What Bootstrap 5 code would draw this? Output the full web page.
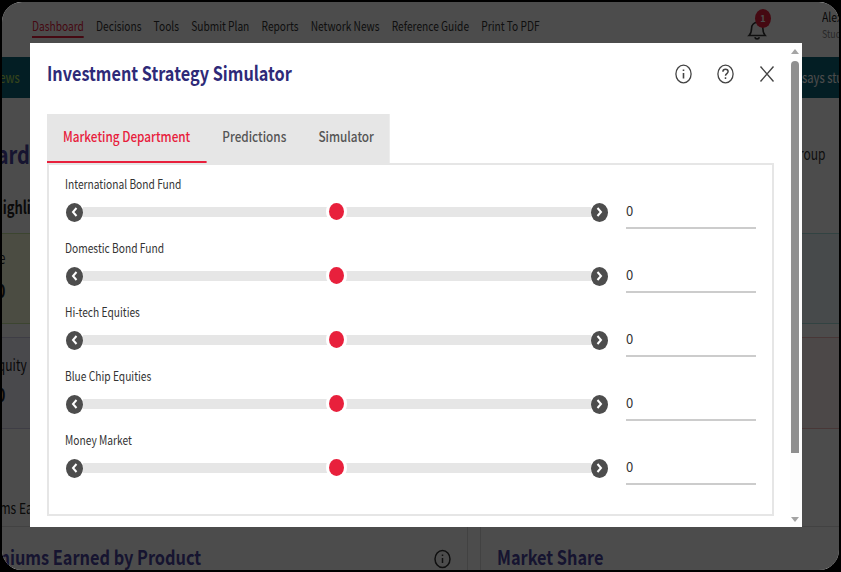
<!DOCTYPE html>
<html lang="en">
<head>
<meta charset="utf-8">
<title>Investment Strategy Simulator</title>
<link rel="stylesheet" href="https://cdn.jsdelivr.net/npm/bootstrap@5.3.0/dist/css/bootstrap.min.css">
<style>
html,body{height:100%;margin:0;overflow:hidden;background:#000;font-family:"Noto Sans CJK SC","Noto Sans",sans-serif;}
.frame{position:relative;width:841px;height:572px;background:#fff;border:solid #000;border-width:2px 2.5px 2px 2px;border-radius:22px;overflow:hidden;color:#222;}
.sx-l,.sx-r{display:inline-block;white-space:nowrap;transform:scaleX(.8);}
.sx-l{transform-origin:left center;}
.sx-r{transform-origin:right center;}
.top-bar{height:55px;padding-left:30px;}
.top-bar .nav{gap:15.6px;font-size:13px;line-height:18px;margin-top:-5px;transform:scaleX(.783);transform-origin:left center;flex-wrap:nowrap;width:700px;}
.top-bar .nav-link{padding:0 0 1px;color:#333;white-space:nowrap;}
.top-bar .nav-link.active{color:#e8203c;border-bottom:2px solid #e8203c;}
.nav-slot{flex:1;min-width:0;}
.bell-box{position:relative;width:24px;height:24px;margin-right:53px;margin-top:-8px;}
.bell-dot{position:absolute;left:10px;top:-4.5px;width:16px;height:19px;border-radius:50%;background:#e8203c;color:#fff;font-size:9px;font-weight:700;line-height:19px;text-align:center;}
.who{width:17px;overflow:hidden;line-height:17px;font-size:13px;margin-top:-9px;}
.who small{display:block;font-size:11px;color:#888;}
.ticker{height:41px;background:#0d6478;color:#fff;font-size:14px;}
.lc{display:flex;justify-content:flex-end;white-space:nowrap;}
.news-l{width:18px;color:#b7e35a;}
.rc{width:37px;white-space:nowrap;}
.dash-h{height:37px;margin-top:37px;}
.dash-t{width:28px;font-size:25px;font-weight:700;color:#4a45a0;line-height:37px;}
.grp{font-size:15px;color:#333;width:37px;display:flex;justify-content:flex-end;padding:2px 14px 0 0;}
.high-h{height:34px;margin-top:18px;font-size:18px;font-weight:700;color:#222;line-height:32px;}
.high-h span{margin-left:-9px;transform:scaleX(.72);}
.kpi{height:91px;margin-top:9px;}
.kpi+.kpi{margin-top:13px;height:92px;}
.kpi-l,.kpi-r{border:solid;border-width:1px 0;}
.kpi-l{width:28px;padding-top:15px;}
.kpi-r{width:37px;}
.t-green{background:#fbffdc;border-color:#c9e8a0;}
.t-lav{background:#f6f5ff;border-color:#cfcbe8;padding-top:18px;}
.t-teal{background:#edf9fb;border-color:#a8e0dc;}
.t-pink{background:#fff1f1;border-color:#f0b8b8;}
.kpi-l .lc{font-size:15px;line-height:18px;}
.w3{width:3px;}
.w25{width:25px;}
.kpi-l .kpi-n{font-size:19px;font-weight:700;line-height:22px;margin-top:12px;}
.t-lav .kpi-n{margin-top:9px !important;}
.prem-l{height:98px;padding-top:69px;font-size:15px;line-height:20px;border-bottom:1px solid #ddd;}
.prem-l span{margin-left:-43px;}
.bot{height:43px;}
.pane-a{width:466px;border-right:1px solid #ddd;padding-right:16px;overflow:hidden;}
.pane-b{margin-left:12px;border-left:1px solid #ddd;padding-left:16px;}
.bot-t{font-size:20px;font-weight:700;color:#4a45a0;line-height:30px;white-space:nowrap;padding-top:15px;transform:scaleX(.815);transform-origin:left center;}
.pane-a .bot-t{margin-left:-35px;}
.bot-i{margin-top:22px;flex:none;}
.shade{position:absolute;inset:0;background:rgba(0,0,0,.7);}
.sim{position:absolute;left:28px;top:41px;width:772px;height:484px;border:0;border-radius:0;display:flex;flex-direction:row;background:#fff;color:#222;}
.sim-main{flex:1;min-width:0;padding:0 16px 0 17px;}
.sim-head{height:71px;padding-top:12px;}
.sim-title{font-size:20px;font-weight:700;color:#2e2a78;line-height:36px;margin:0;transform:scaleX(.811);transform-origin:left center;white-space:nowrap;}
.sim-acts{gap:25px;padding-top:9px;margin-right:-1px;}
.sim-acts svg{display:block;}
.act-btn{background:none;border:0;padding:0;line-height:0;}
.tabs-w{display:inline-flex;flex-wrap:nowrap;background:#e6e6e6;height:49px;border:0;transform:scaleX(.84);transform-origin:left center;}
.tabs-w .nav-link{border:0;border-radius:0;padding:0 19.1px;height:49px;line-height:45px;font-size:14px;font-weight:500;color:#555;background:none;margin:0;white-space:nowrap;}
.tabs-w .nav-link.active{color:#e8203c;background:#e6e6e6;border-bottom:2.5px solid #e8203c;}
.panel-box{border:2px solid #e6e6e6;padding:11px 16px 18px;width:727px;}
.f-row{height:64px;display:flex;gap:17px;}
.f-left{width:544px;}
.f-lab{display:block;font-size:12.5px;line-height:16px;margin:0 0 10px;color:#333;transform:scaleX(.817);transform-origin:left center;white-space:nowrap;}
.f-slide{display:flex;align-items:center;height:20px;padding:0 1px 0 .5px;}
.arr{flex:none;width:17px;height:19px;border:0;padding:0;background:#4d4d4d;border-radius:50%;display:flex;align-items:center;justify-content:center;}
.f-slide .form-range{flex:1;min-width:0;height:20px;padding:0;margin:0;}
.form-range::-webkit-slider-runnable-track{height:10px;background:#e6e6e6;border-radius:0;}
.form-range::-webkit-slider-thumb{-webkit-appearance:none;width:15px;height:17px;margin-top:-4px;border-radius:50%;background:#e8203c;box-shadow:0 0 0 3px #fff;}
.f-val{flex:none;width:130px;height:31px;margin-top:22px;border:0;border-bottom:2px solid #ccc;border-radius:0;padding:0 0 5px;font-size:13px;color:#333;box-shadow:none;font-family:inherit;}
.sbar{flex:none;width:12px;display:flex;flex-direction:column;align-items:center;padding:6px 1.5px 5px 0;background:#fdfdfd;}
.tri-u,.tri-d{width:0;height:0;border-left:4.5px solid transparent;border-right:4.5px solid transparent;}
.tri-u{border-bottom:5px solid #a3a3a3;}
.tri-d{border-top:5px solid #a3a3a3;margin-top:auto;}
.thumbv{width:8px;height:392px;margin-top:7px;background:#8f8f8f;border-radius:4px 4px 0 0;}
</style>
</head>
<body>
<div class="frame">
  <header class="top-bar d-flex align-items-center">
    <div class="nav-slot">
    <ul class="nav">
      <li class="nav-item"><a class="nav-link active" href="#">Dashboard</a></li>
      <li class="nav-item"><a class="nav-link" href="#">Decisions</a></li>
      <li class="nav-item"><a class="nav-link" href="#">Tools</a></li>
      <li class="nav-item"><a class="nav-link" href="#">Submit Plan</a></li>
      <li class="nav-item"><a class="nav-link" href="#">Reports</a></li>
      <li class="nav-item"><a class="nav-link" href="#">Network News</a></li>
      <li class="nav-item"><a class="nav-link" href="#">Reference Guide</a></li>
      <li class="nav-item"><a class="nav-link" href="#">Print To PDF</a></li>
    </ul>
    </div>
    <div class="bell-box">
      <svg width="24" height="24" viewBox="0 0 24 24" fill="none" stroke="#333" stroke-width="1.6"><path d="M4 19.5c2-2 2.6-4 2.6-7.5a5.6 5.6 0 0 1 11.200 0c0 3.500.6 5.500 2.400 7.500z"/><path d="M9.800 21.200a2.400 2.400 0 0 0 4.600 0"/></svg>
      <span class="bell-dot">1</span>
    </div>
    <div class="who"><span class="sx-l">Alex</span><small class="sx-l">Student</small></div>
  </header>
  <div class="ticker d-flex align-items-center justify-content-between">
    <div class="lc news-l"><span class="sx-r">News</span></div>
    <div class="rc"><span class="sx-l">says students</span></div>
  </div>
  <div class="dash-h d-flex justify-content-between align-items-center">
    <div class="lc dash-t"><span class="sx-r">Dashboard</span></div>
    <div class="rc grp"><span class="sx-r">Group</span></div>
  </div>
  <div class="high-h"><span class="sx-l">Highlights</span></div>
  <div class="kpi d-flex justify-content-between">
    <div class="kpi-l t-green"><div class="lc w3"><span class="sx-r">Revenue</span></div><div class="lc kpi-n w3"><span class="sx-r">$0</span></div></div>
    <div class="kpi-r t-teal"></div>
  </div>
  <div class="kpi d-flex justify-content-between">
    <div class="kpi-l t-lav"><div class="lc w25"><span class="sx-r">Equity</span></div><div class="lc kpi-n w3"><span class="sx-r">$0</span></div></div>
    <div class="kpi-r t-pink"></div>
  </div>
  <div class="prem-l"><span class="sx-l">Premiums Earned by Product</span></div>
  <div class="bot d-flex">
    <div class="pane-a d-flex justify-content-between">
      <div class="bot-t">Premiums Earned by Product</div>
      <svg class="bot-i" width="17" height="20" viewBox="0 0 17 20" fill="none" stroke="#333" stroke-width="1.500"><ellipse cx="8.500" cy="10" rx="7.500" ry="8.500"/><path d="M8.500 9v5M8.500 5.500v1.500"/></svg>
    </div>
    <div class="pane-b"><div class="bot-t">Market Share</div></div>
  </div>

  <div class="shade"></div>

  <div class="sim modal-content" role="dialog" aria-label="Investment Strategy Simulator">
    <div class="sim-main">
      <div class="sim-head d-flex justify-content-between align-items-start">
        <h5 class="sim-title">Investment Strategy Simulator</h5>
        <div class="sim-acts d-flex align-items-center">
          <button class="act-btn" type="button" aria-label="Info"><svg width="17" height="20" viewBox="0 0 17 20" fill="none" stroke="#444" stroke-width="1.300"><ellipse cx="8.500" cy="10" rx="7.600" ry="8.800"/><path d="M8.500 9v5.500M8.500 5.500v1.500" stroke-width="1.600"/></svg></button>
          <button class="act-btn" type="button" aria-label="Help"><svg width="17" height="20" viewBox="0 0 17 20" fill="none" stroke="#444" stroke-width="1.300"><ellipse cx="8.500" cy="10" rx="7.600" ry="8.800"/><path d="M5.900 7.800c0-1.700 1.100-2.500 2.600-2.500s2.600.9 2.600 2.300c0 2-2.600 2-2.600 4.200M8.500 13.300v1.600" stroke-width="1.500"/></svg></button>
          <button class="act-btn" type="button" aria-label="Close"><svg width="16" height="18" viewBox="0 0 16 18" fill="none" stroke="#444" stroke-width="1.400"><path d="M1.500 1.500l13 15M14.500 1.500l-13 15"/></svg></button>
        </div>
      </div>
      <ul class="nav nav-tabs tabs-w" role="tablist">
        <li class="nav-item"><a class="nav-link active" href="#">Marketing Department</a></li>
        <li class="nav-item"><a class="nav-link" href="#">Predictions</a></li>
        <li class="nav-item"><a class="nav-link" href="#">Simulator</a></li>
      </ul>
      <div class="panel-box">
        <div class="f-row"><div class="f-left"><label class="f-lab">International Bond Fund</label><div class="f-slide"><button class="arr" type="button" aria-label="Decrease"><svg width="7" height="10" viewBox="0 0 7 10" fill="none" stroke="#fff" stroke-width="2"><path d="M5.500 1L2 5l3.500 4"/></svg></button><input class="form-range" type="range" min="-100" max="100" value="0" aria-label="International Bond Fund"><button class="arr" type="button" aria-label="Increase"><svg width="7" height="10" viewBox="0 0 7 10" fill="none" stroke="#fff" stroke-width="2"><path d="M1.500 1L5 5 1.500 9"/></svg></button></div></div><input class="form-control f-val" value="0" aria-label="International Bond Fund value"></div>
        <div class="f-row"><div class="f-left"><label class="f-lab">Domestic Bond Fund</label><div class="f-slide"><button class="arr" type="button" aria-label="Decrease"><svg width="7" height="10" viewBox="0 0 7 10" fill="none" stroke="#fff" stroke-width="2"><path d="M5.500 1L2 5l3.500 4"/></svg></button><input class="form-range" type="range" min="-100" max="100" value="0" aria-label="Domestic Bond Fund"><button class="arr" type="button" aria-label="Increase"><svg width="7" height="10" viewBox="0 0 7 10" fill="none" stroke="#fff" stroke-width="2"><path d="M1.500 1L5 5 1.500 9"/></svg></button></div></div><input class="form-control f-val" value="0" aria-label="Domestic Bond Fund value"></div>
        <div class="f-row"><div class="f-left"><label class="f-lab">Hi-tech Equities</label><div class="f-slide"><button class="arr" type="button" aria-label="Decrease"><svg width="7" height="10" viewBox="0 0 7 10" fill="none" stroke="#fff" stroke-width="2"><path d="M5.500 1L2 5l3.500 4"/></svg></button><input class="form-range" type="range" min="-100" max="100" value="0" aria-label="Hi-tech Equities"><button class="arr" type="button" aria-label="Increase"><svg width="7" height="10" viewBox="0 0 7 10" fill="none" stroke="#fff" stroke-width="2"><path d="M1.500 1L5 5 1.500 9"/></svg></button></div></div><input class="form-control f-val" value="0" aria-label="Hi-tech Equities value"></div>
        <div class="f-row"><div class="f-left"><label class="f-lab">Blue Chip Equities</label><div class="f-slide"><button class="arr" type="button" aria-label="Decrease"><svg width="7" height="10" viewBox="0 0 7 10" fill="none" stroke="#fff" stroke-width="2"><path d="M5.500 1L2 5l3.500 4"/></svg></button><input class="form-range" type="range" min="-100" max="100" value="0" aria-label="Blue Chip Equities"><button class="arr" type="button" aria-label="Increase"><svg width="7" height="10" viewBox="0 0 7 10" fill="none" stroke="#fff" stroke-width="2"><path d="M1.500 1L5 5 1.500 9"/></svg></button></div></div><input class="form-control f-val" value="0" aria-label="Blue Chip Equities value"></div>
        <div class="f-row"><div class="f-left"><label class="f-lab">Money Market</label><div class="f-slide"><button class="arr" type="button" aria-label="Decrease"><svg width="7" height="10" viewBox="0 0 7 10" fill="none" stroke="#fff" stroke-width="2"><path d="M5.500 1L2 5l3.500 4"/></svg></button><input class="form-range" type="range" min="-100" max="100" value="0" aria-label="Money Market"><button class="arr" type="button" aria-label="Increase"><svg width="7" height="10" viewBox="0 0 7 10" fill="none" stroke="#fff" stroke-width="2"><path d="M1.500 1L5 5 1.500 9"/></svg></button></div></div><input class="form-control f-val" value="0" aria-label="Money Market value"></div>
      </div>
    </div>
    <div class="sbar"><span class="tri-u"></span><span class="thumbv"></span><span class="tri-d"></span></div>
  </div>
</div>
<script src="https://cdn.jsdelivr.net/npm/bootstrap@5.3.0/dist/js/bootstrap.bundle.min.js"></script>
</body>
</html>
